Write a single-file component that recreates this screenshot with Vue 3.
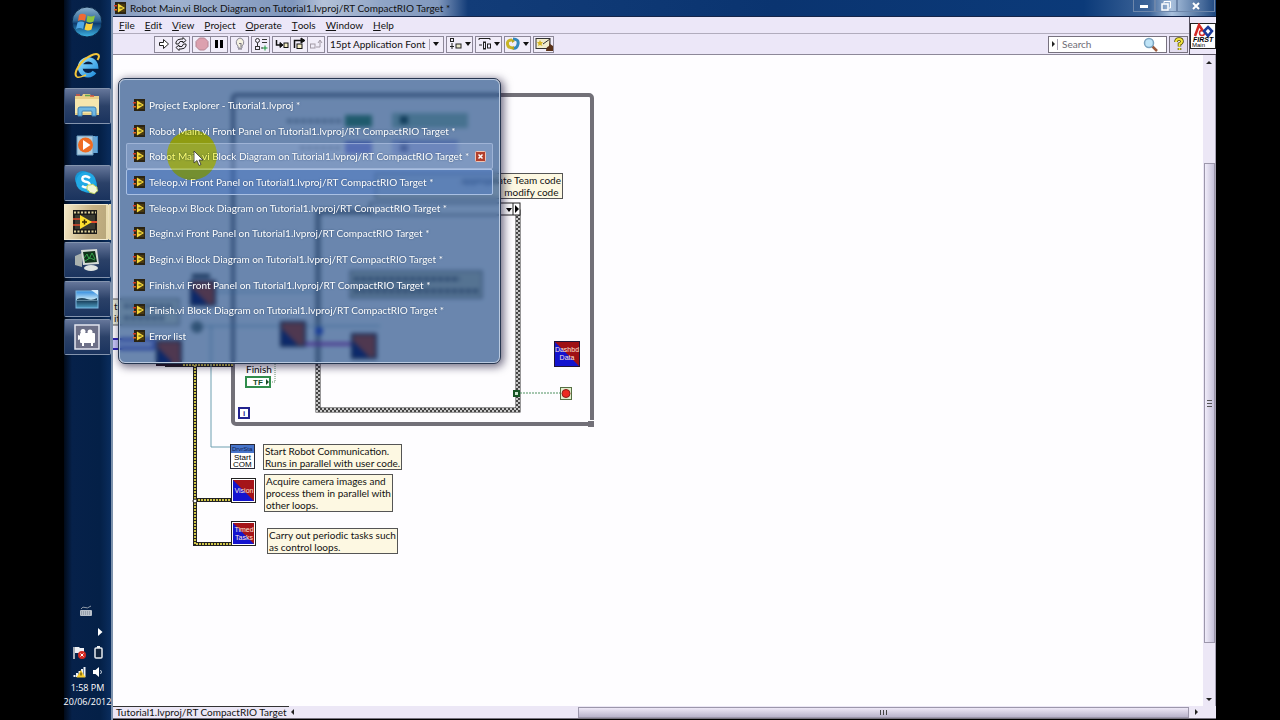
<script setup>
const target = 'Tutorial1.lvproj/RT CompactRIO Target'
const windows = [
  { title: 'Project Explorer - Tutorial1.lvproj *' },
  { title: `Robot Main.vi Front Panel on ${target} *` },
  { title: `Robot Main.vi Block Diagram on ${target} *`, state: 'hover' },
  { title: `Teleop.vi Front Panel on ${target} *`, state: 'current' },
  { title: `Teleop.vi Block Diagram on ${target} *` },
  { title: `Begin.vi Front Panel on ${target} *` },
  { title: `Begin.vi Block Diagram on ${target} *` },
  { title: `Finish.vi Front Panel on ${target} *` },
  { title: `Finish.vi Block Diagram on ${target} *` },
  { title: 'Error list' },
]
const menus = ['File', 'Edit', 'View', 'Project', 'Operate', 'Tools', 'Window', 'Help']
</script>

<template>
  <div class="screen">
    <svg class="defs" width="0" height="0" aria-hidden="true">
      <symbol id="lv" viewBox="0 0 12 12">
        <rect x="1" y="0" width="11" height="12" fill="#2b2414" />
        <rect x="3" y="2" width="8" height="8" fill="#4a3a10" />
        <path d="M4 1.500 11 6 4 10.500Z" fill="#f5d93a" />
        <path d="M5.500 5.500h3v1h-3z" fill="#2b2414" />
        <path d="M0 3h3v1.500H0z" fill="#d33a25" />
        <path d="M0 7h3v1.500H0z" fill="#e0662a" />
      </symbol>
      <linearGradient id="orb" x1="0" y1="0" x2="0" y2="1">
        <stop offset="0" stop-color="#8fb3cf" /><stop offset=".45" stop-color="#2f6796" />
        <stop offset=".55" stop-color="#0d3c70" /><stop offset="1" stop-color="#3fb6e6" />
      </linearGradient>
      <linearGradient id="ie" x1="0" y1="0" x2="1" y2="1">
        <stop offset="0" stop-color="#8fdcff" /><stop offset="1" stop-color="#2390dd" />
      </linearGradient>
      <linearGradient id="pic" x1="0" y1="0" x2="0" y2="1">
        <stop offset="0" stop-color="#2f8ade" /><stop offset=".5" stop-color="#c8e8f6" />
        <stop offset=".6" stop-color="#1c4562" /><stop offset="1" stop-color="#4e9ec4" />
      </linearGradient>
    </svg>

    <nav class="taskbar" aria-label="Taskbar">
      <button class="orb" aria-label="Start">
        <svg width="32" height="32" viewBox="0 0 32 32">
          <circle cx="16" cy="16" r="15" fill="url(#orb)" stroke="#0a2748" />
          <path d="M8 9q3.500-2.500 7 0l-1 6q-3.500-2-7 0z" fill="#ef6a35" />
          <path d="M16.500 9.500q3.500 2 7.500 0l-1.500 6q-3.500 2-7 0z" fill="#8cc63f" />
          <path d="M6.500 16.500q3.500-2 7 0l-1.500 6.500q-3.500-2-7 0z" fill="#4fa8e8" />
          <path d="M15 17q3.500 2 7 0l-1.500 6.500q-3.500 2-7 0z" fill="#fbd13d" />
        </svg>
      </button>
      <button class="task" aria-label="Internet Explorer">
        <svg width="28" height="28" viewBox="0 0 28 28" fill="none">
          <path d="M21.500 20A8 8 0 1 1 23 14.500H9" stroke="url(#ie)" stroke-width="4.500" />
          <path d="M4 25C-1 22 8 8 17 4 25 0 28 3 24.500 8" stroke="#f3c53a" stroke-width="2" />
          <path d="M4 25c3 1 6-1 9-2" stroke="#f3c53a" stroke-width="1.500" />
        </svg>
      </button>
      <div class="pinned">
        <button class="task open" aria-label="File Explorer">
          <svg width="28" height="26" viewBox="0 0 28 26">
            <path d="M2 3h7l1-2h7l1 2h8v19H2z" fill="#e8cf86" />
            <path d="M3 2h4M17 3h4" stroke="#d8573c" stroke-width="1.500" />
            <path d="M12 2.500h5" stroke="#62a54f" stroke-width="1.500" />
            <rect x="2" y="6" width="24" height="14" fill="#f5e6ae" />
            <path d="M5 23v-7q0-2 2-2h14q2 0 2 2v7h-4v-4q0-1-1-1h-8q-1 0-1 1v4z" fill="#6fb7e2" stroke="#3d80b5" />
          </svg>
        </button>
        <button class="task" aria-label="Media Player">
          <svg width="24" height="24" viewBox="0 0 24 24">
            <path d="M17 3h6v17h-6z" fill="#3f86c2" /><path d="M19 3v17M21 4v16" stroke="#8fc3e6" />
            <path d="M2 3h16v19H2z" fill="#aeccdf" stroke="#6a9dc2" />
            <circle cx="10.500" cy="12" r="7.500" fill="#ee6c23" /><path d="m8 7 7.500 5L8 17z" fill="#fff" />
          </svg>
        </button>
        <button class="task open" aria-label="Skype">
          <svg width="28" height="28" viewBox="0 0 28 28">
            <circle cx="10" cy="10" r="8" fill="#1798d6" /><circle cx="16" cy="16" r="8" fill="#1798d6" />
            <circle cx="13" cy="13" r="10" fill="#22a9e5" />
            <path d="M17 9q-4-3-7-1-2 3 2 4.500 6 1 4.500 4.500-3 3-7.500 0" fill="none" stroke="#fff" stroke-width="2.500" />
            <path d="M14 18q0-3 3-2 3-2 5 1 3 1 2 3 2 2-1 3-1 3-4 1-3 0-3-2-3-1-2-4z" fill="#f3f7d4" stroke="#b9ce5a" />
          </svg>
        </button>
        <button class="task active" aria-label="LabVIEW">
          <svg width="26" height="26" viewBox="0 0 26 26">
            <rect x="1" y="1" width="24" height="24" fill="#1d1c1a" />
            <path d="M2 3.500h22M2 22.500h22" stroke="#dccf9a" stroke-width="2" stroke-dasharray="2 1.500" />
            <rect x="3" y="6" width="20" height="14" fill="#393930" />
            <path d="M1 10h7M1 16h7" stroke="#e04c2d" stroke-width="1.500" /><path d="M18 13h7" stroke="#e04c2d" stroke-width="2" />
            <path d="M8 6l12 7-12 7z" fill="#ffe02f" /><path d="M10 13h5M12.500 10.500v5" stroke="#3a2c00" stroke-width="1.500" />
          </svg>
        </button>
        <button class="task open" aria-label="Performance Monitor">
          <svg width="26" height="24" viewBox="0 0 26 24">
            <path d="M1 8l7-3v14l-7-2z" fill="#a9b1ae" /><path d="M7 2l16-1 2 15-16 1z" fill="#d6dbd7" />
            <path d="M9 4l12-1 2 11-12 1z" fill="#10331b" />
            <path d="M10 10l3-4 2 5 3-6 3 6M11 13l5-3 5 2" fill="none" stroke="#37a54e" />
            <ellipse cx="17" cy="20" rx="7" ry="3" fill="#dfe4e2" />
          </svg>
        </button>
        <button class="task open" aria-label="Photo Viewer">
          <svg width="24" height="22" viewBox="0 0 24 22">
            <rect x="1" y="3" width="22" height="17" fill="url(#pic)" stroke="#7db7e0" />
            <path d="M2 11q5-2 10 0t10-1v2H2z" fill="#264b63" /><path d="M16 2h7v5z" fill="#d5ecfa" />
          </svg>
        </button>
        <button class="task open" aria-label="Camera">
          <svg width="26" height="26" viewBox="0 0 26 26">
            <rect x="1" y="1" width="24" height="24" fill="#6d7088" stroke="#e3e5ef" stroke-width="1.500" />
            <circle cx="9" cy="7.500" r="2.500" fill="#fff" /><circle cx="16" cy="8" r="2.500" fill="#fff" />
            <rect x="6" y="9" width="15" height="10" rx="1" fill="#fff" /><path d="M7 12l-3-1v5l3-1zM8 19h2v3H8zM17 19h2v3h-2z" fill="#fff" />
          </svg>
        </button>
      </div>
      <div class="tray">
        <svg class="keyboard" width="14" height="12" viewBox="0 0 14 12">
          <path d="M2 4Q4 1 6 2.500T12 1" fill="none" stroke="#8f9aa8" /><rect x="1" y="5" width="12" height="6" rx="1" fill="#b9c0ca" />
          <path d="M2 7h10M2 9h10" stroke="#75808f" stroke-dasharray="1 1" />
        </svg>
        <svg class="more" width="5" height="8" viewBox="0 0 5 8"><path d="M0 0l4.500 4L0 8z" fill="#fff" /></svg>
        <div class="trayrow">
          <svg width="13" height="13" viewBox="0 0 13 13">
            <path d="M1 1v12" stroke="#ddd" stroke-width="1.500" /><path d="M2 1h4l1 1h4v6H7L6 7H2z" fill="#eef0f4" />
            <circle cx="9" cy="9" r="4" fill="#d42a22" /><path d="m7.500 7.500 3 3m0-3-3 3" stroke="#fff" />
          </svg>
          <svg width="9" height="13" viewBox="0 0 9 13"><path d="M3 1h3" stroke="#eee" stroke-width="2" /><rect x="1" y="2" width="7" height="10" rx="1" fill="#12243c" stroke="#e8ebf0" stroke-width="1.500" /></svg>
        </div>
        <div class="trayrow">
          <svg width="13" height="12" viewBox="0 0 13 12">
            <path d="M1.500 11V9M4 11V7M6.500 11V5M9 11V3M11.500 11V1" stroke="#eef2f7" stroke-width="2" />
            <path d="M8 4l4.500 7.500h-9z" fill="#f5ca2c" /><path d="M8 6.500v3" stroke="#3a2d00" />
          </svg>
          <svg width="10" height="12" viewBox="0 0 10 12"><path d="M0 4h2.500L6 1v10L2.500 8H0z" fill="#fff" /><path d="M7.500 4q2 2 0 4" fill="none" stroke="#cfd8e4" /></svg>
        </div>
        <time>1:58 PM</time>
        <time>20/06/2012</time>
      </div>
    </nav>

    <main class="window">
      <header class="titlebar">
        <svg width="12" height="12"><use href="#lv" /></svg>
        <h1>Robot Main.vi Block Diagram on {{ target }} *</h1>
        <div class="winbtns">
          <button aria-label="Minimize"><svg width="10" height="10"><rect x="1" y="4" width="8" height="3" fill="#fff" /></svg></button>
          <button aria-label="Restore"><svg width="10" height="10" fill="none" stroke="#fff"><path d="M3 2.500V.500h6.500v6.500H8" /><rect x="1" y="3" width="6" height="6" stroke-width="1.500" /></svg></button>
          <button class="close" aria-label="Close"><svg width="10" height="10"><path d="m2 2 6 6m0-6-6 6" stroke="#fff" stroke-width="2" /></svg></button>
        </div>
      </header>
      <div class="bars">
        <div class="barcol">
          <nav class="menubar" aria-label="Menu">
            <button v-for="m in menus" :key="m"><u>{{ m[0] }}</u>{{ m.slice(1) }}</button>
          </nav>
          <div class="toolbar">
            <div class="group">
              <button aria-label="Run"><svg width="14" height="14" fill="#fff" stroke="#222"><path d="M2.500 5.500h4v-3l5 4.500-5 4.500v-3h-4z" /></svg></button>
              <button aria-label="Run continuously"><svg width="14" height="14" fill="none" stroke="#222"><path d="M2 7V5q1-3 5-3h2V.500L12 3.500 9 6V4.500H6L4.500 7zM12 7v2q-1 3-5 3H5v1.500L2 10.500 5 8v1.500h3L9.500 7z" /></svg></button>
            </div>
            <div class="group">
              <button aria-label="Abort"><svg width="14" height="14"><path d="M4.500 1h5L13 4.500v5L9.500 13h-5L1 9.500v-5z" fill="#dca0ae" stroke="#b58492" /></svg></button>
              <button aria-label="Pause"><svg width="14" height="14"><path d="M4.500 3v8M9.500 3v8" stroke="#000" stroke-width="3" /></svg></button>
            </div>
            <div class="group">
              <button aria-label="Highlight execution"><svg width="14" height="14"><path d="M7 1a4.500 4.500 0 0 0-2 8v2h4V9a4.500 4.500 0 0 0-2-8z" fill="#f4f1e0" stroke="#8a8895" /><path d="M5 12h4M6 6l1 1 1-1v4" fill="none" stroke="#77727f" /></svg></button>
            </div>
            <div class="group">
              <button aria-label="Retain wire values"><svg width="14" height="14" fill="none" stroke="#333"><circle cx="3.500" cy="3.500" r="2" /><path d="M8 2.500h5M8 5.500h5M3.500 6v3" /><rect x="1.500" y="9.500" width="4" height="3" /><path d="M7 11h2" /><path d="M11 8.500v5M8.500 11h5" stroke="#169436" /></svg></button>
            </div>
            <div class="group">
              <button aria-label="Step into"><svg width="14" height="14" fill="none" stroke="#111"><path d="M1.500 3v5H6" stroke-width="1.500" /><path d="M5 5.500 8 8l-3 2.500z" fill="#111" /><rect x="9" y="6" width="4" height="4.500" fill="#f6efc5" /></svg></button>
              <button aria-label="Step over"><svg width="14" height="14" fill="none" stroke="#111"><path d="M2.500 11V3.500H10" stroke-width="1.500" /><path d="m9 1 4 2.500L9 6z" fill="#111" /><rect x="5" y="7" width="5" height="4.500" fill="#f6efc5" /></svg></button>
              <button aria-label="Step out"><svg width="14" height="14" fill="none" stroke="#a29aa6"><rect x="1.500" y="7" width="4.500" height="4" /><path d="M7 10h4V4M9 6l2-3 2 3" /></svg></button>
            </div>
            <label class="font"><select aria-label="Font"><option>15pt Application Font</option></select><i class="sep"></i><i class="caret"></i></label>
            <div class="group wide">
              <button aria-label="Align objects"><svg width="13" height="14" fill="none" stroke="#222"><rect x="1.500" y="1.500" width="3" height="3" /><path d="M3 6v6M1 9.500h4" /><rect x="7" y="7" width="5" height="4" fill="#e9e7c9" /></svg><i class="caret"></i></button>
            </div>
            <div class="group wide">
              <button aria-label="Distribute objects"><svg width="13" height="14" fill="none" stroke="#222"><path d="M1 3V1.500h11V3M1 8h3" /><rect x="5.500" y="5" width="2" height="7" /><rect x="9.500" y="7" width="3" height="4" /></svg><i class="caret"></i></button>
            </div>
            <div class="group wide">
              <button aria-label="Reorder"><svg width="14" height="14" fill="none"><path d="M6 3Q1 3 1.500 7T7 11" stroke="#c8b527" stroke-width="3" /><path d="M7 2q6 0 5 5t-5 4" stroke="#3488bd" stroke-width="3" /><path d="M6 2v4l3-2zM8 9v4l-3-2z" fill="#b3a423" /></svg><i class="caret"></i></button>
            </div>
            <div class="group">
              <button class="clean" aria-label="Clean up diagram"><svg width="18" height="14"><rect x="1" y="1.500" width="14" height="10" fill="#f2edcc" stroke="#333" /><path d="m5 3 1 2 2 0-1.500 2 1 2-2.500-1-2 1 .500-2L2 5h2z" fill="#d6b627" /><path d="m8 7 7-5" stroke="#333" /><path d="M15 1v6l3 2v5h-7q0-4 3-5z" fill="#5a3219" /></svg></button>
            </div>
            <label class="search"><i class="right"></i><i class="sep"></i><input type="text" placeholder="Search" aria-label="Search" />
              <svg width="15" height="15"><path d="m9 9 5 5" stroke="#9a5a3d" stroke-width="2.500" /><circle cx="6" cy="6" r="4.500" fill="#bfe4f7" stroke="#7ba4c1" stroke-width="1.500" /></svg>
            </label>
            <button class="help" aria-label="Help"><svg width="12" height="14" fill="none"><path d="M3 5q0-3 3-3t3 2.500Q9 6 6.500 7v2.500M6.500 11v2" stroke="#4b4600" stroke-width="3.500" /><path d="M3 5q0-3 3-3t3 2.500Q9 6 6.500 7v2.500M6.500 11v2" stroke="#f3e63c" stroke-width="2" /></svg></button>
          </div>
        </div>
        <div class="viicon">
          <svg width="26" height="26" viewBox="0 0 26 26">
            <rect x=".5" y=".5" width="25" height="25" fill="#fff" stroke="#222" />
            <path d="m5 13 4-11 4 6" fill="none" stroke="#d32a26" stroke-width="2.500" /><circle cx="12" cy="10" r="2.500" fill="none" stroke="#d32a26" stroke-width="1.500" />
            <path d="m18 4 4 4-4 5-4-5z" fill="none" stroke="#1b3b9c" stroke-width="2.500" />
            <text x="3" y="19" font-size="7" font-weight="700" font-style="italic">FIRST</text><text x="2" y="24" font-size="6">Main</text>
          </svg>
        </div>
      </div>

      <div class="work">
        <div class="canvas">
          <svg class="diagram" width="520" height="520" viewBox="113 55 520 520">
            <defs>
              <pattern id="chk" width="4" height="4" patternUnits="userSpaceOnUse"><rect width="4" height="4" fill="#c8c8c8" /><path d="M0 0h2v2H0zM2 2h2v2H2z" fill="#444" /></pattern>
              <g id="subvi"><rect width="26" height="26" fill="#9f1015" /><path d="M0 0l26 26H0z" fill="#1414cf" /><rect x=".5" y=".5" width="25" height="25" fill="none" stroke="#221638" /></g>
              <g id="subvi-dim"><rect width="26" height="26" fill="#b83008" /><path d="M0 6l20 20H0z" fill="#080850" /><rect x="1" y="1" width="24" height="24" fill="none" stroke="#221620" stroke-width="2" /></g>
            </defs>
            <rect x="233" y="95" width="359" height="329" rx="3" fill="none" stroke="#727078" stroke-width="4" />
            <path d="M588 421h6v6h-6z" fill="#727078" /><path d="M588 420.500h6" stroke="#fff" />
            <rect x="318" y="212" width="200" height="198" fill="none" stroke="#333" stroke-width="5" /><rect x="318" y="212" width="200" height="198" fill="none" stroke="url(#chk)" stroke-width="4" />
            <rect x="370" y="203" width="150" height="12" fill="#fff" stroke="#222" /><path d="M506 208h6l-3 4zM515 205l4 4-4 4z" fill="#000" /><path d="M513 203v12" stroke="#222" />
            <path d="M165 365h68M195 365v179h36M195 500h36" fill="none" stroke="#222" stroke-width="4" />
            <path d="M165 365h68M195 365v179h36M195 500h36" fill="none" stroke="#d0c64a" stroke-width="2" stroke-dasharray="2 1" />
            <circle cx="195" cy="501" r="2" fill="#fff" stroke="#111" />
            <path d="M211 326v121h20M190 326h190M215 292h100" fill="none" stroke="#6d9fb0" />
            <path d="M275 364v18h-5" fill="none" stroke="#68906e" stroke-dasharray="1 1" />
            <path d="M520 393h40" stroke="#4f9160" stroke-dasharray="2 1" />
            <rect x="514" y="391" width="5" height="5" fill="#cce6cf" stroke="#175425" stroke-width="2" />
            <rect x="560.500" y="387.500" width="11" height="12" fill="#e1eecd" stroke="#566f43" /><circle cx="566" cy="393.500" r="4" fill="#ed2a20" stroke="#8b1d18" />
            <use href="#subvi-dim" x="190" y="280" /><use href="#subvi-dim" x="156" y="340" /><use href="#subvi-dim" x="280" y="321" /><use href="#subvi-dim" x="351" y="333" />
            <path d="M192 276h18" stroke="#222" stroke-width="4" />
            <path d="M305 344h46" stroke="#a31aa3" stroke-width="3" /><circle cx="319" cy="331" r="4" fill="#293dc2" /><circle cx="197" cy="327" r="6" fill="#68766d" />
            <rect x="345" y="115" width="27" height="12" fill="#3b8a54" /><rect x="392" y="113" width="76" height="15" fill="#a3c7b0" /><rect x="400" y="116" width="8" height="8" fill="#183e27" />
            <rect x="345" y="142" width="27" height="12" fill="#5d56ce" /><rect x="392" y="140" width="66" height="15" fill="#b9b7ec" /><rect x="400" y="144" width="8" height="8" fill="#28266f" />
            <path d="M287 121h54M300 148h42" stroke="#555" stroke-width="4" stroke-dasharray="5 2" opacity=".6" />
            <rect x="350" y="271" width="132" height="27" fill="#c9cbb6" stroke="#555" /><path d="M354 279h106M354 291h125" stroke="#555" stroke-width="4" stroke-dasharray="5 2" />
            <rect x="105" y="299" width="74" height="26" fill="#e9ebd6" stroke="#555" /><path d="M124 306h50M124 318h40" stroke="#777" stroke-width="4" stroke-dasharray="5 2" />
            <rect x="105" y="339" width="49" height="10" fill="#c9c7fa" stroke="#2d23b5" stroke-width="2" />
            <use href="#subvi" x="554" y="341" />
            <g class="vi-label" text-anchor="middle"><text x="567" y="352">Dashbd</text><text x="567" y="360">Data</text></g>
            <text x="246" y="373" class="ui">Finish</text>
            <rect x="246" y="377" width="24" height="10" fill="#fff" stroke="#318d4c" stroke-width="2" /><text x="253" y="385" font-size="8" font-weight="700" fill="#174c27">TF</text><path d="M266 379l3 3-3 3z" fill="#174c27" />
            <rect x="239" y="408" width="10" height="10" fill="#fff" stroke="#23238f" stroke-width="2" /><text x="243" y="416" font-size="8" font-weight="700" fill="#23238f">i</text>
            <rect x="230.500" y="444.500" width="24" height="24" fill="#fff" stroke="#282838" /><rect x="231" y="445" width="23" height="8" fill="#4774ca" /><text x="232" y="451" font-size="6" fill="#101c4c">DrvrSta</text>
            <g font-size="8"><text x="234" y="460">Start</text><text x="233" y="467">COM</text></g>
            <g fill="#fff" stroke="#222"><rect x="231.500" y="478.500" width="24" height="24" /><rect x="231.500" y="521.500" width="24" height="24" /></g>
            <path d="M233 480h21v21h-21zM233 523h21v21h-21z" fill="#a51419" /><path d="M233 480l21 21h-21zM233 523l21 21h-21z" fill="#1414cf" />
            <g class="vi-label" text-anchor="middle"><text x="244" y="493">Vision</text><text x="244" y="532">Timed</text><text x="244" y="540">Tasks</text></g>
          </svg>
          <p class="note n1">appropriate Team code<br />modify code&nbsp;</p>
          <p class="frag">t<br />it</p>
          <p class="note n4">Start Robot Communication.<br />Runs in parallel with user code.</p>
          <p class="note n5">Acquire camera images and<br />process them in parallel with<br />other loops.</p>
          <p class="note n6">Carry out periodic tasks such<br />as control loops.</p>
        </div>
        <div class="vscroll"><i class="up"></i><div class="thumb"><span></span></div><i class="down"></i></div>
      </div>
      <footer class="status">
        <span class="path">{{ target }}</span>
        <div class="hscroll"><i class="left"></i><div class="hthumb"><span></span></div><i class="right"></i></div>
      </footer>
    </main>

    <section class="popup" aria-label="LabVIEW windows">
      <ul>
        <li v-for="w in windows" :key="w.title" :class="w.state">
          <button class="entry"><svg width="12" height="12"><use href="#lv" /></svg><span>{{ w.title }}</span></button>
          <button v-if="w.state === 'hover'" aria-label="Close window"><svg width="11" height="11"><rect x=".5" y=".5" width="10" height="10" rx="1" fill="#b2402d" stroke="#f0c4b4" /><path d="m3.500 3.500 4 4m0-4-4 4" stroke="#fff" stroke-width="1.500" /></svg></button>
        </li>
      </ul>
    </section>
    <div class="halo"></div>
    <svg class="cursor" width="11" height="17" viewBox="0 0 11 17"><path d="M1 1v12l3-2.500 2 5 2-1-2-4.500h4z" fill="#fff" stroke="#333" stroke-width=".8" /></svg>
  </div>
</template>

<style>
body { background: #000; overflow: hidden; }
</style>

<style scoped>
.screen { position: relative; display: flex; box-sizing: border-box; height: 100vh; padding: 0 5%; background: #000; font: 10px/12px Lato, "Open Sans", sans-serif; color: #111; }
.defs { position: absolute; }
button { display: flex; align-items: center; justify-content: center; padding: 0; border: 0; background: none; font: inherit; color: inherit; }
svg { flex: none; display: block; }
svg text { font-family: "Liberation Sans", sans-serif; }
svg text.ui { font: 10px Lato, sans-serif; }
i { flex: none; width: 0; height: 0; }
.caret { border: 3px solid transparent; border-top: 4px solid #111; border-bottom: 0; }
.right { border: 3px solid transparent; border-left: 3px solid #222; border-right: 0; }
.left { border: 3px solid transparent; border-right: 3px solid #222; border-left: 0; }
.up { border: 3px solid transparent; border-bottom: 3px solid #222; border-top: 0; }
.down { border: 3px solid transparent; border-top: 3px solid #222; border-bottom: 0; }
.sep { width: 1px; height: 11px; background: #aaa4b5; }

.taskbar { flex: none; display: flex; flex-direction: column; box-sizing: border-box; width: 49px; border-right: 2px solid #7e93ad; background: linear-gradient(90deg, #010a18, #06214a 8px, #042047 36px, #0a2d5e); }
.taskbar button { padding-right: 2px; }
.orb { height: 44px; }
.task { box-sizing: border-box; width: 47px; height: 36px; }
.orb + .task { height: 44px; }
.pinned { display: flex; flex-direction: column; justify-content: space-between; height: 267px; }
.open { border: 1px solid #8494ae; border-left-color: #33486a; border-radius: 2px; background: linear-gradient(180deg, #65769a, #2b4168 50%, #1a335e); }
.active { border: 1px solid #f4ecd2; border-right: 5px double #e9dcb0; background: linear-gradient(100deg, #f5e9c6, #c6b183 60%, #b8a77c); }
.tray { display: flex; flex-direction: column; align-items: center; margin: auto 0 13px; color: #fff; white-space: nowrap; }
.keyboard { margin-right: 4px; }
.more { margin: 11px 0 0 25px; }
.trayrow { display: flex; align-items: center; justify-content: space-between; width: 30px; height: 14px; margin-top: 6px; }
.more + .trayrow { margin-top: 9px; }
.tray time { margin-top: 4px; font: 9px/10px "Open Sans", sans-serif; }

.window { flex: 1; min-width: 0; display: flex; flex-direction: column; margin-bottom: 1px; }
.titlebar { flex: none; display: flex; align-items: center; height: 16px; padding-left: 1px; border-bottom: 1px solid #15254a; background: linear-gradient(90deg, #8297bb, #a0b3d0 60px, #7f96bc 180px, #b4c2d8 210px, #8fa4c6 270px, #8198bd 325px, #123c78 355px, #0a3470 60%, #0b3a79 88%, #3e6599 94%, #a9c0dc 96%, #1d467e); }
h1 { flex: 1; margin: 0 0 0 4px; font: inherit; color: #111; }
.winbtns { display: flex; align-self: stretch; margin-right: 1px; }
.winbtns button { width: 22px; height: 12px; border: 1px solid #6d86aa; border-top: 0; box-sizing: border-box; }
.winbtns .close { width: 38px; }
.bars { flex: none; display: flex; background: #ece7f8; }
.barcol { flex: 1; min-width: 0; }
.menubar { display: flex; align-items: center; gap: 10px; height: 16px; padding-left: 6px; border-bottom: 1px solid #b1acbd; }
.menubar u { text-underline-offset: 1px; }
.toolbar { display: flex; align-items: center; gap: 2px; height: 20px; padding-left: 41px; border-bottom: 1px solid #8d8899; }
.group { display: flex; box-sizing: border-box; height: 17px; border: 1px solid #8d8899; background: #f1edf9; }
.group button { width: 17px; }
.group button + button { border-left: 1px solid #8d8899; }
.group .clean { width: 19px; }
.wide button { width: 25px; gap: 3px; }
.font { display: flex; align-items: center; gap: 3px; box-sizing: border-box; width: 117px; height: 17px; padding: 0 4px 0 2px; border: 1px solid #8d8899; background: #f1edf9; }
select { flex: 1; min-width: 0; padding: 0; border: 0; appearance: none; background: none; font: inherit; color: #111; }
.search { display: flex; align-items: center; gap: 2px; box-sizing: border-box; width: 119px; height: 17px; margin-left: auto; padding: 0 8px 0 3px; border: 1px solid #77727f; background: #fff; }
input { flex: 1; min-width: 0; padding: 0 0 0 2px; border: 0; background: none; font: inherit; }
input::placeholder { color: #6e6c76; opacity: 1; }
.help { width: 19px; height: 17px; margin-right: 1px; box-sizing: border-box; border: 1px solid #77727f; background: #e3ddef; }
.viicon { display: flex; align-items: center; border: 1px solid #55505f; border-width: 0 0 1px 1px; }

.work { flex: 1; min-height: 0; display: flex; }
.canvas { position: relative; flex: 1; min-width: 0; overflow: hidden; background: #fefdff; }
.diagram { position: absolute; inset: 0 auto auto 0; }
.vi-label { font-size: 7px; fill: #ffe6d8; }
.note { position: absolute; margin: 0; padding: 0 1px; border: 1px solid #555; background: #fdf8e2; white-space: nowrap; }
.n1 { left: 262px; width: 184px; top: 118px; text-align: right; }
.frag { position: absolute; left: 1px; top: 245px; margin: 0; }
.n4 { left: 150px; top: 389px; }
.n5 { left: 151px; top: 419px; }
.n6 { left: 154px; top: 473px; }
.vscroll { display: flex; flex-direction: column; align-items: center; box-sizing: border-box; width: 13px; padding: 6px 0 5px; border-right: 1px solid #a8a3b4; background: #ece7f6; }
.thumb { display: grid; place-items: center; box-sizing: border-box; width: 11px; height: 480px; margin: 99px 0 auto; border: 1px solid #9c97ab; background: linear-gradient(90deg, #f0ecfa, #c6c1d9); }
.thumb span { width: 5px; height: 5px; border: 1px solid #555; border-width: 1px 0; background: linear-gradient(#555, #555) center / 5px 1px no-repeat; }
.status { flex: none; display: flex; height: 12px; background: #ece7f6; border-bottom: 1px solid #77727f; }
.path { padding: 0 2px 0 3px; border-top: 1px solid #333; line-height: 11px; white-space: nowrap; }
.hscroll { flex: 1; display: flex; align-items: center; padding: 0 18px 0 2px; }
.hthumb { display: grid; place-items: center; box-sizing: border-box; width: 611px; height: 11px; margin: 0 6px 0 auto; border: 1px solid #9c97ab; background: linear-gradient(#eee8f7, #b9b3cb); }
.hthumb span { width: 5px; height: 5px; border: 1px solid #444; border-width: 0 1px; background: linear-gradient(#444, #444) center / 1px 5px no-repeat; }

.popup { position: absolute; left: calc(5% + 55px); top: 79px; box-sizing: border-box; padding: 12px 6px 13px; border: 1px solid #b9c9e0; border-radius: 6px; outline: 1px solid #263650; background: rgba(15, 62, 124, .62); backdrop-filter: blur(2px); box-shadow: 2px 2px 8px 2px rgba(20, 15, 50, .6); color: #fff; }
.popup ul { position: relative; display: flex; flex-direction: column; width: 367px; height: 257px; margin: 0; padding: 0; list-style: none; }
.popup::before { content: ""; position: absolute; left: 47px; top: 50px; width: 50px; height: 50px; border-radius: 50%; background: #8f9c28; }
.popup li { flex: 1; display: flex; align-items: center; box-sizing: border-box; padding: 0 6px; border: 1px solid transparent; border-radius: 2px; }
.popup .hover { border-color: rgba(190, 205, 235, .5); background: rgba(165, 185, 225, .35); }
.popup .current { border-color: #a9c0e4; background: rgba(75, 125, 210, .4); }
.entry { flex: 1; justify-content: flex-start; gap: 4px; white-space: nowrap; text-shadow: 0 0 2px #324d75; }
.halo { position: absolute; left: calc(5% + 103px); top: 130px; width: 50px; height: 50px; border-radius: 50%; background: #ffff70; mix-blend-mode: multiply; }
.cursor { position: absolute; left: calc(5% + 129px); top: 150px; }
</style>
